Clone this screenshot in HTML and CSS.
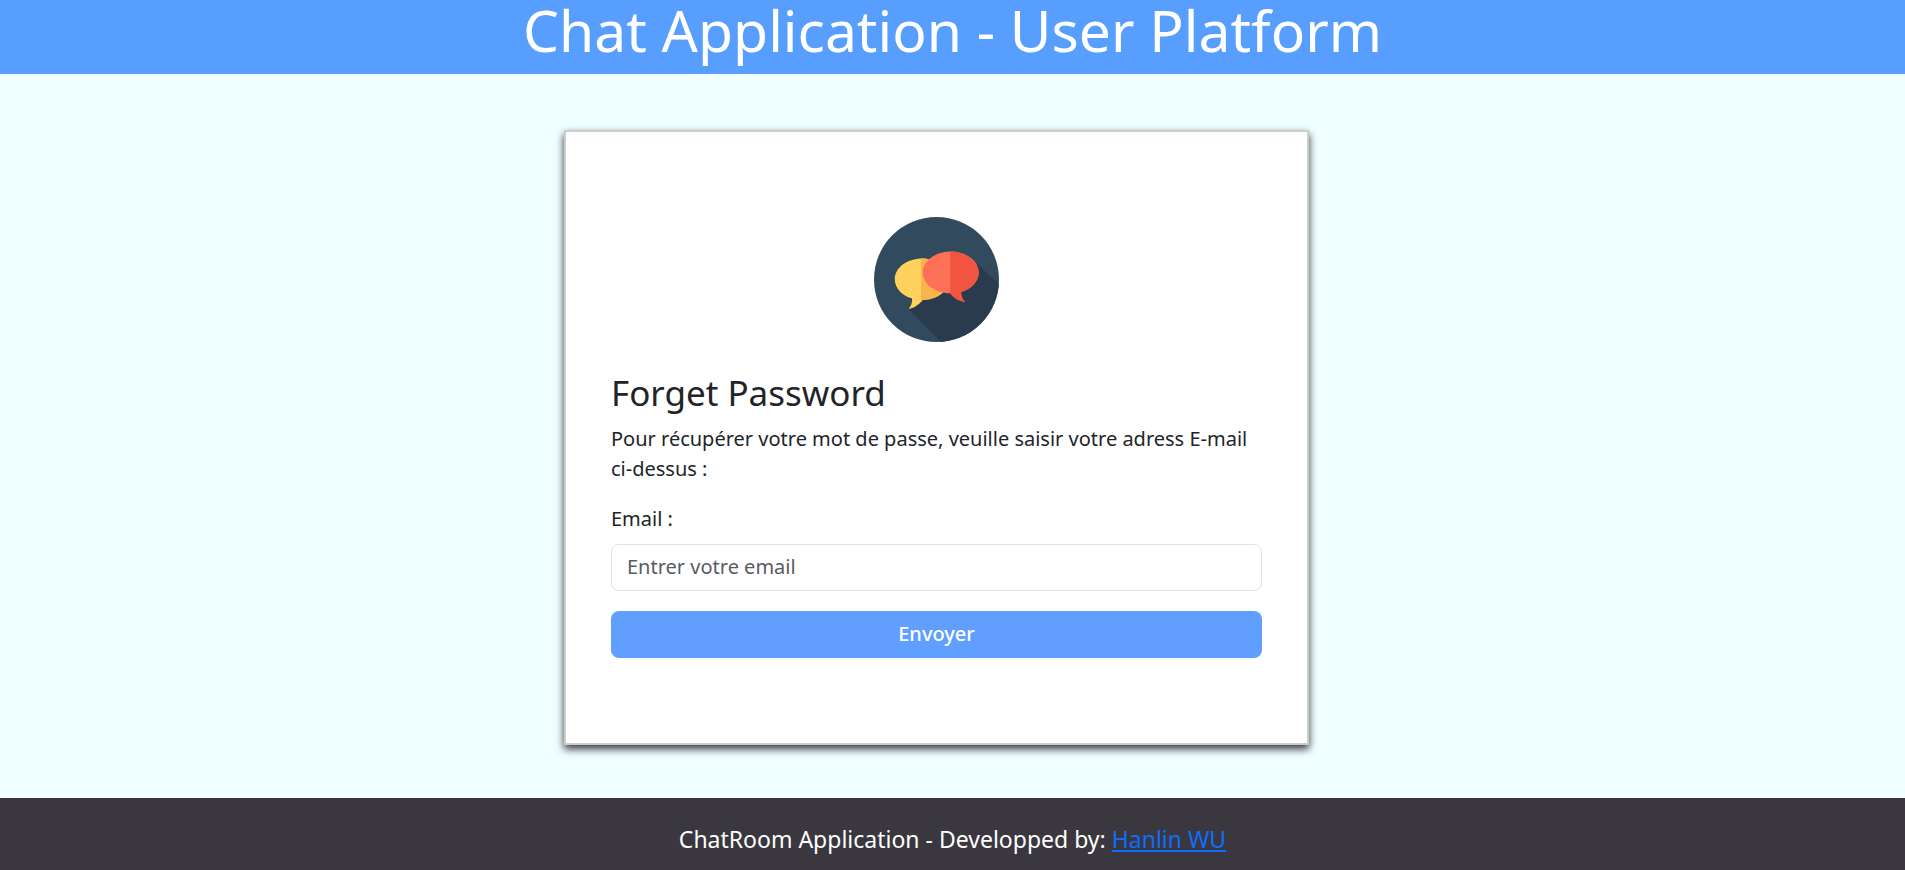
FILE: index.html
```html
<!DOCTYPE html>
<html lang="fr">
<head>
  <meta charset="utf-8">
  <meta name="viewport" content="width=device-width, initial-scale=1">
  <title>Chat Application - User Platform</title>
  <link rel="stylesheet" href="styles.css">
</head>
<body>
  <header class="site-header">
    <h1 class="site-title">Chat Application - User Platform</h1>
  </header>

  <main class="content">
    <form class="card">
      <svg class="logo" viewBox="0 0 125 125" aria-hidden="true">
        <defs>
          <clipPath id="disc"><circle cx="62.5" cy="62.5" r="62.5"/></clipPath>
          <clipPath id="yellow-right"><rect x="47" y="0" width="78" height="125"/></clipPath>
          <clipPath id="red-right"><rect x="76.3" y="0" width="49" height="125"/></clipPath>
          <path id="yellow-bubble" d="M48 41.6C63 41.6 75 50.9 75 62.3S63 83 48.8 83C45 87.400 40.500 91.200 34.700 92C37 89 38.300 85.800 38 81.600C27.800 78.600 20.800 71.100 20.800 62.300C20.800 50.900 33 41.600 48 41.600Z"/>
          <path id="red-bubble" d="M76.700 34.600C92.200 34.600 104.700 44 104.700 55.500C104.700 64.400 97.500 72 87.200 75.100C86.800 78.800 88.400 82 91 84.900C84.800 84.200 79.500 81 76.200 76.300C61.200 76.300 48.700 67 48.700 55.500S61.200 34.600 76.700 34.600Z"/>
        </defs>
        <circle cx="62.5" cy="62.5" r="62.5" fill="#324a5e"/>
        <path clip-path="url(#disc)" d="M33 79L38 84L34.700 92L70 128H130V72L102.500 46L60 60Z" fill="#2b3b4e"/>
        <use href="#yellow-bubble" fill="#ffd15d"/>
        <use href="#yellow-bubble" fill="#f9b54c" clip-path="url(#yellow-right)"/>
        <use href="#red-bubble" fill="#ff7058"/>
        <use href="#red-bubble" fill="#f1543f" clip-path="url(#red-right)"/>
      </svg>
      <h2 class="card-title">Forget Password</h2>
      <p class="card-text">Pour récupérer votre mot de passe, veuille saisir votre adress E-mail ci-dessus :</p>
      <label class="field-label" for="email">Email :</label>
      <input class="field" id="email" name="email" type="email" placeholder="Entrer votre email">
      <button class="submit" type="submit">Envoyer</button>
    </form>
  </main>

  <footer class="site-footer">
    ChatRoom Application - Developped by: <a class="author" href="#">Hanlin WU</a>
  </footer>
</body>
</html>
```
FILE: styles.css
```css
* {
  box-sizing: border-box;
}

body {
  display: flex;
  flex-direction: column;
  min-height: 100vh;
  margin: 0;
  background: #f0ffff;
  color: #212529;
  font-family: "Segoe UI", "Noto Sans", "Open Sans", sans-serif;
  font-size: 20px;
  line-height: 30px;
}

.site-header {
  padding-bottom: 14px;
  background: #589eff;
  color: #fff;
  text-align: center;
}

.site-title {
  margin: 0;
  font-size: 57px;
  font-weight: 400;
  line-height: 60px;
}

.content {
  display: flex;
  flex: 1;
  align-items: flex-start;
  justify-content: center;
  padding: 56px 32px 53px 0;
}

.card {
  display: flex;
  flex-direction: column;
  width: 100%;
  max-width: 745px;
  padding: 85px 45px;
  border: 2px solid #ccc;
  background: #fff;
  box-shadow: 0 4px 8px #38343c;
}

.logo {
  align-self: center;
  width: 125px;
  height: 125px;
  margin-bottom: 30px;
}

.card-title {
  margin: 0 0 10px;
  font-size: 35px;
  font-weight: 400;
  line-height: 42px;
}

.card-text {
  margin: 0 0 20px;
}

.field-label {
  margin-bottom: 10px;
}

.field {
  width: 100%;
  margin-bottom: 20px;
  padding: 7px 15px 8px;
  border: 1px solid #dee2e6;
  border-radius: 8px;
  background: #fff;
  color: inherit;
  font: inherit;
}

.field::placeholder {
  color: #595c5f;
  opacity: 1;
}

.submit {
  width: 100%;
  padding: 8px 15px 9px;
  border: 0;
  border-radius: 8px;
  background: #609fff;
  color: #fff;
  font: inherit;
  font-weight: 500;
  cursor: pointer;
}

.site-footer {
  padding: 23px 16px 13px;
  background: #3b373e;
  color: #fff;
  font-size: 23px;
  line-height: 36px;
  text-align: center;
}

.author {
  color: #0d6efd;
}
```
